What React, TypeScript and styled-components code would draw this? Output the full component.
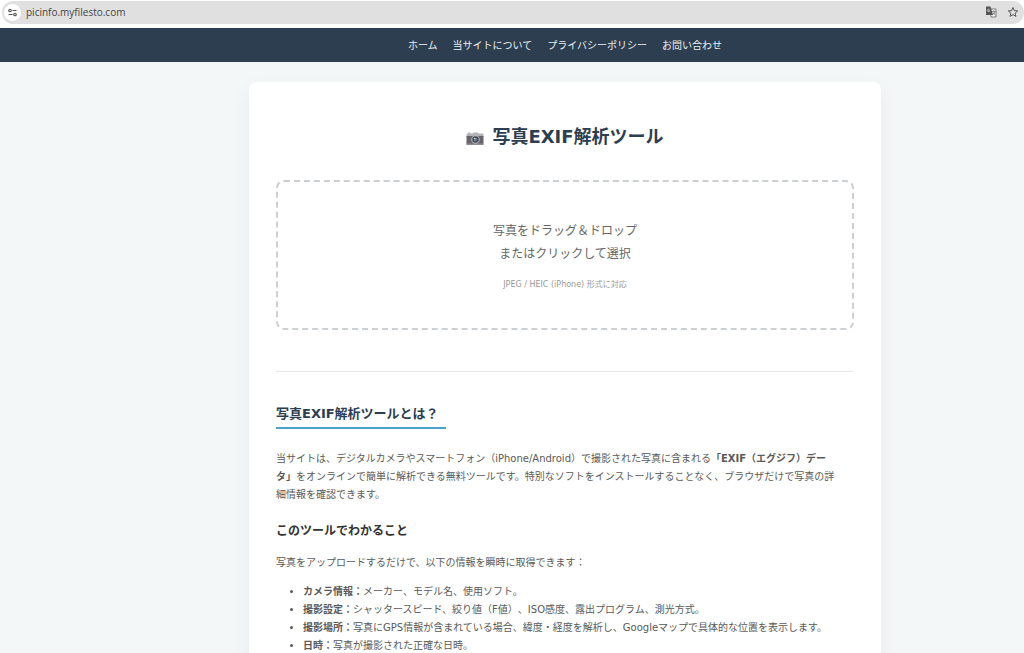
import React from "react";
import styled, { createGlobalStyle } from "styled-components";

const GlobalStyle = createGlobalStyle`
  *, *::before, *::after { box-sizing: border-box; }
  body {
    margin: 0;
    height: 100vh;
    overflow: hidden;
    background: #f3f7f8;
    color: #5a5a5a;
    font-family: "DejaVu Sans", "Noto Sans CJK JP", sans-serif;
    font-size: 10px;
    line-height: 18px;
    text-spacing-trim: space-all;
  }
`;

const AddressBar = styled.header`
  display: flex;
  align-items: center;
  height: 28px;
  padding: 1px 0 4px 2px;
  background: #fff;
`;

const AddressPill = styled.div`
  display: flex;
  flex: 1;
  align-items: center;
  gap: 10px;
  height: 23px;
  padding: 0 5px 1px 2px;
  border-radius: 12px;
  background: #e0e0e0;
`;

const Address = styled.div`
  display: flex;
  flex: 1;
  align-items: center;
  gap: 5px;
`;

const IconButton = styled.button<{ $round?: boolean }>`
  display: grid;
  place-items: center;
  width: ${(p) => (p.$round ? "17px" : "12px")};
  height: ${(p) => (p.$round ? "17px" : "12px")};
  padding: 0;
  border: 0;
  border-radius: 50%;
  background: ${(p) => (p.$round ? "#fff" : "transparent")};
  color: #555;
`;

const AddressInput = styled.input`
  flex: 1;
  min-width: 0;
  padding: 0;
  border: 0;
  outline: 0;
  background: transparent;
  color: #444;
  font: 10px/20px "Open Sans", sans-serif;
`;

const Nav = styled.nav`
  height: 34px;
  padding-left: 106px;
  background: #2c3e50;
`;

const NavList = styled.ul`
  display: flex;
  justify-content: center;
  gap: 15px;
  margin: 0;
  padding: 9px 0 7px;
  list-style: none;
`;

const NavLink = styled.a`
  color: #ecf0f1;
  text-decoration: none;
`;

const Page = styled.div`
  padding: 20px 0 0 106px;
`;

const Card = styled.main`
  max-width: 632px;
  margin: 0 auto;
  padding: 41px 27px;
  border-radius: 8px;
  background: #fff;
  box-shadow: 0 7px 20px rgba(0, 0, 0, 0.05);
`;

const Title = styled.h1`
  display: flex;
  align-items: center;
  justify-content: center;
  gap: 8px;
  margin: 0 0 29px;
  color: #2c3e50;
  font-size: 18px;
  line-height: 28px;
`;

const DropZone = styled.button`
  display: flex;
  flex-direction: column;
  align-items: center;
  justify-content: center;
  gap: 10px;
  width: 100%;
  height: 150px;
  padding: 4px 0 0;
  border: 2px dashed #ccd0d2;
  border-radius: 8px;
  background: #fff;
  color: #666;
  font: inherit;
`;

const DropText = styled.span`
  font-size: 12px;
  line-height: 23px;
`;

const DropHint = styled.span`
  color: #999;
  font-size: 8px;
  line-height: 18px;
`;

const Article = styled.article`
  margin-top: 41px;
  padding-top: 32px;
  border-top: 1px solid #e8eaea;
`;

const SectionTitle = styled.h2`
  display: inline-block;
  margin: 0;
  padding: 0 7px 3px 0;
  border-bottom: 2px solid #4aa3c8;
  color: #2c3e50;
  font-size: 13px;
  line-height: 20px;
`;

const SubTitle = styled.h3`
  margin: 17px 0 13px;
  color: #333;
  font-size: 12px;
  line-height: 20px;
`;

const Text = styled.p<{ $lead?: boolean }>`
  margin: ${(p) => (p.$lead ? "21px 0 0" : "0")};
  padding-right: 14px;
`;

const List = styled.ul`
  margin: 11px 0 0;
  padding-left: 27px;
`;

const TuneIcon = () => (
  <svg width="9" height="9" viewBox="0 0 18 16" fill="none" stroke="currentColor" strokeWidth="2.4" aria-hidden="true">
    <circle cx="4" cy="4" r="2.5" />
    <path d="M9 4h8M1 12h8" />
    <circle cx="14" cy="12" r="2.5" />
  </svg>
);

const TranslateIcon = () => (
  <svg width="12" height="12" viewBox="0 0 24 24" aria-hidden="true">
    <path d="M9 6h13v16H12z" fill="#eee" stroke="#666" strokeWidth="1.6" />
    <path d="M2 1h9l5 17H2z" fill="#555" />
    <path d="M10 8.500H7.500v2h1.600a2.600 2.600 0 1 1-.4-3.700" fill="none" stroke="#e0e0e0" strokeWidth="1.400" />
    <path d="M14 11h7M17.500 9v2M20 11c-.7 3-2.500 5-4.500 6M16 13c1 2 2.500 3.500 4.500 4.500" fill="none" stroke="#666" strokeWidth="1.400" />
  </svg>
);

const StarIcon = () => (
  <svg width="12" height="12" viewBox="0 0 24 24" fill="none" stroke="currentColor" strokeWidth="2" aria-hidden="true">
    <path d="M12 3l2.700 6.200 6.800.6-5.200 4.400 1.600 6.600-5.900-3.500-5.900 3.500 1.600-6.600-5.200-4.400 6.800-.6z" />
  </svg>
);

const CameraIcon = () => (
  <svg width="18" height="18" viewBox="0 0 36 36" aria-hidden="true">
    <path d="M4 11V9h5v2h4l2-2h8l2 2h8q2 0 2 2v5H1v-5q0-2 3-2z" fill="#b4b2b8" />
    <path d="M1 16h34v16q0 2-2 2H3q-2 0-2-2z" fill="#67646c" />
    <path d="M1 31h34v1q0 2-2 2H3q-2 0-2-2z" fill="#8d8a91" />
    <circle cx="19" cy="23" r="8.500" fill="#b9b8c0" />
    <circle cx="19" cy="23" r="6.500" fill="#434955" />
    <circle cx="19" cy="23" r="3.500" fill="#6f8291" />
    <circle cx="17" cy="21" r="1.500" fill="#c7d1d8" />
  </svg>
);

const links = ["ホーム", "当サイトについて", "プライバシーポリシー", "お問い合わせ"];

const features = [
  ["カメラ情報：", "メーカー、モデル名、使用ソフト。"],
  ["撮影設定：", "シャッタースピード、絞り値（F値）、ISO感度、露出プログラム、測光方式。"],
  ["撮影場所：", "写真にGPS情報が含まれている場合、緯度・経度を解析し、Googleマップで具体的な位置を表示します。"],
  ["日時：", "写真が撮影された正確な日時。"],
];

export default function App() {
  return (
    <>
      <GlobalStyle />
      <AddressBar>
        <AddressPill>
          <Address>
            <IconButton $round type="button" aria-label="サイト情報"><TuneIcon /></IconButton>
            <AddressInput aria-label="アドレス" defaultValue="picinfo.myfilesto.com" />
          </Address>
          <IconButton type="button" aria-label="翻訳"><TranslateIcon /></IconButton>
          <IconButton type="button" aria-label="ブックマーク"><StarIcon /></IconButton>
        </AddressPill>
      </AddressBar>
      <Nav>
        <NavList>
          {links.map((label) => (
            <li key={label}><NavLink href="#">{label}</NavLink></li>
          ))}
        </NavList>
      </Nav>
      <Page>
        <Card>
          <Title><CameraIcon />写真EXIF解析ツール</Title>
          <DropZone type="button">
            <DropText>写真をドラッグ＆ドロップ<br />またはクリックして選択</DropText>
            <DropHint>JPEG / HEIC (iPhone) 形式に対応</DropHint>
          </DropZone>
          <Article>
            <SectionTitle>写真EXIF解析ツールとは？</SectionTitle>
            <Text $lead>
              当サイトは、デジタルカメラやスマートフォン（iPhone/Android）で撮影された写真に含まれる<strong>「EXIF（エグジフ）データ」</strong>をオンラインで簡単に解析できる無料ツールです。特別なソフトをインストールすることなく、ブラウザだけで写真の詳細情報を確認できます。
            </Text>
            <SubTitle>このツールでわかること</SubTitle>
            <Text>写真をアップロードするだけで、以下の情報を瞬時に取得できます：</Text>
            <List>
              {features.map(([name, detail]) => (
                <li key={name}><strong>{name}</strong>{detail}</li>
              ))}
            </List>
          </Article>
        </Card>
      </Page>
    </>
  );
}
